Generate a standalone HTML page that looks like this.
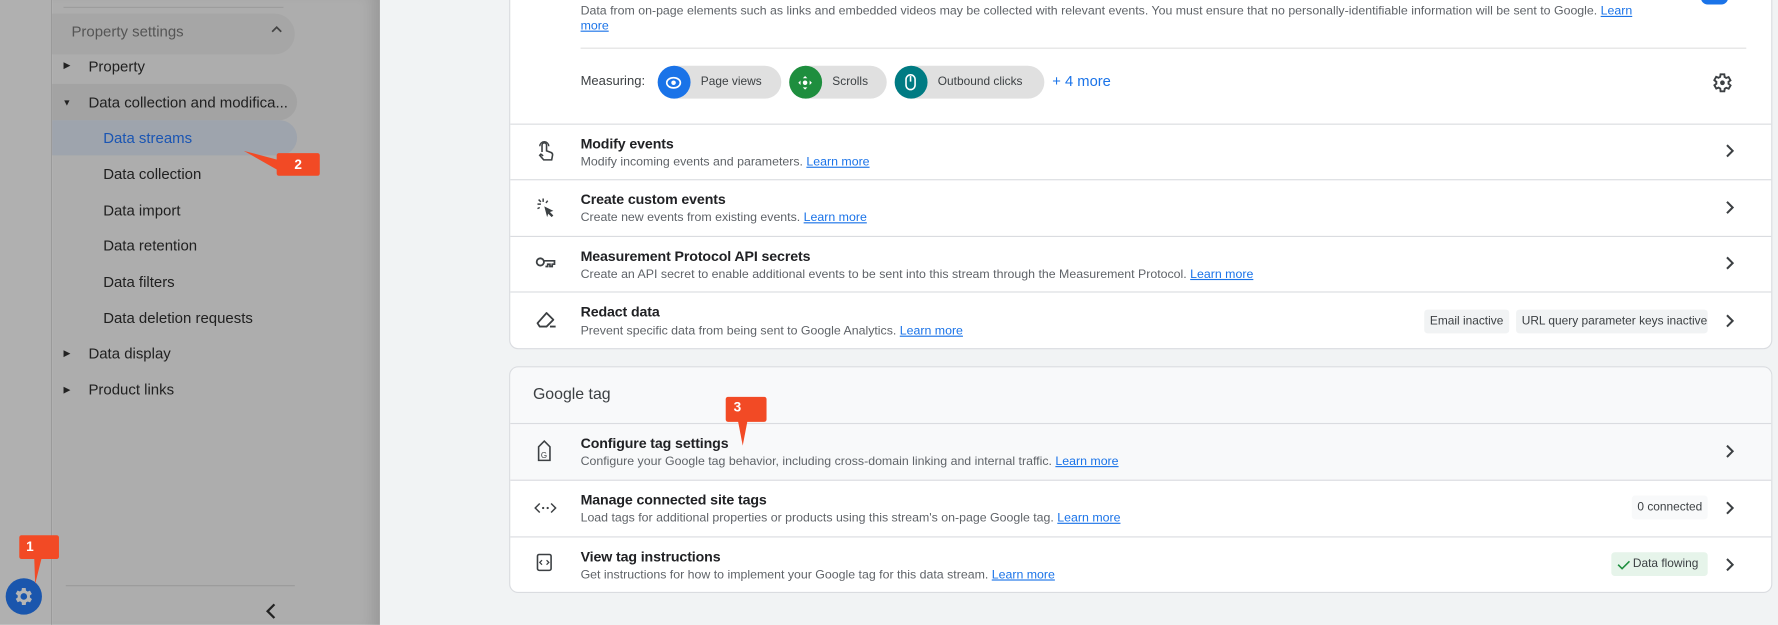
<!DOCTYPE html>
<html><head><meta charset="utf-8"><style>
*{box-sizing:border-box;margin:0;padding:0}
html,body{width:1778px;height:625px;overflow:hidden;background:#f1f3f4}
#w{position:absolute;left:0;top:0;width:1568px;height:551px;transform:scale(1.13393);transform-origin:0 0;font-family:"Liberation Sans",Arial,sans-serif;background:#f1f3f4}
.a{position:absolute;white-space:nowrap}
.rail{left:0;top:0;width:46px;height:551px;background:#b0b0b0;border-right:1px solid #9a9a9a}
.side{left:46px;top:0;width:289px;height:551px;background:#adadad;box-shadow:inset -14px 0 12px -8px rgba(0,0,0,.12)}
.si{font-size:13.2px;color:#202020}
.tri{font-size:8px;color:#222}
.card{background:#fff;border:1px solid #dadce0;border-radius:8px}
.t{font-size:12.5px;color:#202124;font-weight:bold;letter-spacing:-.1px}
.s{font-size:10.9px;color:#5f6368}
.lk{color:#1a73e8;text-decoration:underline}
.sep{height:1px;background:#dadce0}
.chip{height:21px;line-height:21px;font-size:10.5px;color:#3c4043;background:#f1f3f4;border-radius:3px;padding:0 5px}
.badge{background:#f24a25;color:#fff;font-weight:bold;font-size:12px;text-align:center;border-radius:2px}
.mc{height:29px;border-radius:15px;background:#e0e0e0;font-size:10.5px;color:#3c4043;line-height:29px}
.mc i{position:absolute;left:0;top:0;width:29px;height:29px;border-radius:50%}
</style></head><body><div id="w">
<div class="a rail"></div>
<div class="a side"></div>
<div class="a" style="left:56px;top:6px;width:194px;height:1px;background:#9c9c9c"></div>
<div class="a" style="left:46px;top:12px;width:214px;height:36px;border-radius:0 18px 18px 0;background:#a6a6a6"></div>
<div class="a si" style="left:63px;top:20px;color:#555">Property settings</div>
<svg class="a" style="left:237px;top:20px" width="14" height="12"><path d="M3 8l4-4 4 4" stroke="#444" stroke-width="1.5" fill="none"/></svg>
<div class="a tri" style="left:56px;top:53px">▶</div><div class="a si" style="left:78px;top:51px">Property</div>
<div class="a" style="left:46px;top:74px;width:216px;height:32px;border-radius:0 16px 16px 0;background:#a3a3a3"></div>
<div class="a tri" style="left:55px;top:86px">▼</div><div class="a si" style="left:78px;top:83px">Data collection and modifica...</div>
<div class="a" style="left:46px;top:106px;width:216px;height:31px;border-radius:0 16px 16px 0;background:#9ea4ad"></div>
<div class="a si" style="left:91px;top:114px;color:#1a55b3">Data streams</div>
<div class="a si" style="left:91px;top:146px">Data collection</div>
<div class="a si" style="left:91px;top:178px">Data import</div>
<div class="a si" style="left:91px;top:209px">Data retention</div>
<div class="a si" style="left:91px;top:241px">Data filters</div>
<div class="a si" style="left:91px;top:273px">Data deletion requests</div>
<div class="a tri" style="left:56px;top:307px">▶</div><div class="a si" style="left:78px;top:304px">Data display</div>
<div class="a tri" style="left:56px;top:339px">▶</div><div class="a si" style="left:78px;top:336px">Product links</div>
<svg class="a" style="left:210px;top:128px" width="75" height="30"><path d="M5 5L35 13L35 22Z" fill="#f24a25"/></svg>
<div class="a badge" style="left:244px;top:135px;width:38px;height:20px;line-height:20px">2</div>
<div class="a" style="left:58px;top:516px;width:202px;height:1px;background:#9a9a9a"></div>
<svg class="a" style="left:233px;top:531px" width="12" height="16"><path d="M9 2L3 8l6 6" stroke="#222" stroke-width="2" fill="none"/></svg>
<div class="a" style="left:5px;top:510px;width:32px;height:32px;border-radius:50%;background:#1a56ad"></div>
<svg class="a" style="left:11px;top:516px" width="20" height="20" viewBox="0 0 24 24"><path fill="#b5b5b5" d="M19.4 13a7.5 7.5 0 000-2l2.1-1.6-2-3.5-2.5 1a7.4 7.4 0 00-1.7-1L15 3h-4l-.4 2.7a7.4 7.4 0 00-1.7 1l-2.5-1-2 3.5L6.6 11a7.5 7.5 0 000 2l-2.1 1.6 2 3.5 2.5-1c.5.4 1.1.8 1.7 1L11 21h4l.4-2.7c.6-.3 1.2-.6 1.7-1l2.5 1 2-3.5zM13 15.5a3.5 3.5 0 110-7 3.5 3.5 0 010 7z" transform="translate(-1 0)"/></svg>
<svg class="a" style="left:20px;top:485px" width="30" height="32"><path d="M10 2L18 2L11 30Z" fill="#f24a25"/></svg>
<div class="a badge" style="left:17px;top:472px;width:35px;height:21px;line-height:20px;text-align:left;padding-left:6px">1</div>

<div class="a card" style="left:449px;top:-20px;width:1114px;height:328px"></div>
<div class="a s" style="left:512px;top:4px">Data from on-page elements such as links and embedded videos may be collected with relevant events. You must ensure that no personally-identifiable information will be sent to Google. <span class="lk">Learn</span></div>
<div class="a s lk" style="left:512px;top:17px">more</div>
<div class="a" style="left:1500px;top:-8px;width:24px;height:12px;border-radius:6px;background:#1a73e8"></div>
<div class="a" style="left:512px;top:42px;width:1028px;height:1px;background:#e0e0e0"></div>
<div class="a" style="left:512px;top:66px;font-size:11.5px;color:#3c4043">Measuring:</div>
<div class="a mc" style="left:580px;top:58px;width:109px;padding-left:38px"><i style="background:#1a73e8"></i>Page views</div>
<svg class="a" style="left:587px;top:66px" width="14" height="14"><ellipse cx="7" cy="7" rx="6" ry="4.5" stroke="#fff" stroke-width="1.5" fill="none"/><circle cx="7" cy="7" r="2" fill="#fff"/></svg>
<div class="a mc" style="left:696px;top:58px;width:86px;padding-left:38px"><i style="background:#1e8e3e"></i>Scrolls</div>
<svg class="a" style="left:703px;top:66px" width="14" height="14"><path d="M7 1l2 2H5zM7 13l2-2H5zM1 7l2-2v4zM13 7l-2-2v4z" fill="#fff"/><circle cx="7" cy="7" r="2" fill="#fff"/></svg>
<div class="a mc" style="left:789px;top:58px;width:132px;padding-left:38px"><i style="background:#007b83"></i>Outbound clicks</div>
<svg class="a" style="left:797px;top:65px" width="12" height="16"><rect x="2" y="1" width="8" height="13" rx="4" stroke="#fff" stroke-width="1.4" fill="none"/><path d="M6 2v5" stroke="#fff" stroke-width="1.4"/></svg>
<div class="a" style="left:928px;top:64px;font-size:13px;color:#1a73e8">+ 4 more</div>
<svg class="a" style="left:1509px;top:63px" width="20" height="20" viewBox="0 0 24 24"><path fill="none" stroke="#3c4043" stroke-width="2" d="M19.4 13a7.5 7.5 0 000-2l2.1-1.6-2-3.5-2.5 1a7.4 7.4 0 00-1.7-1L15 3h-4l-.4 2.7a7.4 7.4 0 00-1.7 1l-2.5-1-2 3.5L6.6 11a7.5 7.5 0 000 2l-2.1 1.6 2 3.5 2.5-1c.5.4 1.1.8 1.700 1L11 21h4l.4-2.7c.6-.3 1.2-.6 1.7-1l2.5 1 2-3.5z" transform="translate(-1 0)"/><circle cx="12" cy="12" r="2.5" fill="#3c4043"/></svg>

<div class="a sep" style="left:450px;top:109px;width:1112px"></div>
<div class="a sep" style="left:450px;top:158px;width:1112px"></div>
<div class="a sep" style="left:450px;top:208px;width:1112px"></div>
<div class="a sep" style="left:450px;top:257px;width:1112px"></div>

<svg class="a" style="left:472px;top:124px" width="18" height="20"><path d="M6 10V4a2 2 0 014 0v5l4 1.5c1 .5 1.5 1.2 1.3 2.3L14.5 17H7.5L4 13l1-1 2 1.5" stroke="#3c4043" stroke-width="1.4" fill="none"/><path d="M4 5a4 4 0 018 0" stroke="#3c4043" stroke-width="1.2" fill="none"/></svg>
<div class="a t" style="left:512px;top:120px">Modify events</div>
<div class="a s" style="left:512px;top:137px">Modify incoming events and parameters. <span class="lk">Learn more</span></div>
<svg class="a" style="left:472px;top:174px" width="18" height="18"><path d="M8 8l8 4-3 1 3 3-1.5 1.5-3-3-1 3z" fill="#3c4043"/><path d="M7 1v3M2 6h3M3 2l2 2M2 10l2-1M11 3l-1.5 2" stroke="#3c4043" stroke-width="1.3"/></svg>
<div class="a t" style="left:512px;top:169px">Create custom events</div>
<div class="a s" style="left:512px;top:186px">Create new events from existing events. <span class="lk">Learn more</span></div>
<svg class="a" style="left:472px;top:225px" width="18" height="14"><circle cx="4.5" cy="6" r="3.2" stroke="#3c4043" stroke-width="1.6" fill="none"/><path d="M8 5h9v3h-2v2h-2V8h-2v2H9" stroke="#3c4043" stroke-width="1.5" fill="none"/></svg>
<div class="a t" style="left:512px;top:219px">Measurement Protocol API secrets</div>
<div class="a s" style="left:512px;top:236px">Create an API secret to enable additional events to be sent into this stream through the Measurement Protocol. <span class="lk">Learn more</span></div>
<svg class="a" style="left:472px;top:273px" width="20" height="18"><path d="M2 12L10 3l6 6-6 6H4z" stroke="#3c4043" stroke-width="1.6" fill="none" stroke-linejoin="round"/><path d="M13 15h5" stroke="#3c4043" stroke-width="1.6"/></svg>
<div class="a t" style="left:512px;top:268px">Redact data</div>
<div class="a s" style="left:512px;top:286px">Prevent specific data from being sent to Google Analytics. <span class="lk">Learn more</span></div>
<div class="a chip" style="left:1256px;top:273px">Email inactive</div>
<div class="a chip" style="left:1337px;top:273px;width:169px">URL query parameter keys inactive</div>

<svg class="a" style="left:1520px;top:126px" width="12" height="14"><path d="M3 2l5 5-5 5" stroke="#3c4043" stroke-width="1.8" fill="none"/></svg>
<svg class="a" style="left:1520px;top:176px" width="12" height="14"><path d="M3 2l5 5-5 5" stroke="#3c4043" stroke-width="1.8" fill="none"/></svg>
<svg class="a" style="left:1520px;top:225px" width="12" height="14"><path d="M3 2l5 5-5 5" stroke="#3c4043" stroke-width="1.8" fill="none"/></svg>
<svg class="a" style="left:1520px;top:276px" width="12" height="14"><path d="M3 2l5 5-5 5" stroke="#3c4043" stroke-width="1.8" fill="none"/></svg>

<div class="a card" style="left:449px;top:323px;width:1114px;height:200px;overflow:hidden">
 <div class="a" style="left:0;top:0;width:1114px;height:100px;background:#f8f9fa"></div>
</div>
<div class="a" style="left:470px;top:339px;font-size:14px;color:#3c4043">Google tag</div>
<div class="a sep" style="left:450px;top:373px;width:1112px"></div>
<div class="a sep" style="left:450px;top:423px;width:1112px"></div>
<div class="a sep" style="left:450px;top:473px;width:1112px"></div>
<svg class="a" style="left:473px;top:387px" width="14" height="22"><path d="M2 7l5-5 5 5v12H2z" stroke="#3c4043" stroke-width="1.4" fill="none"/><text x="4" y="17" font-size="7" font-family="Liberation Sans" fill="#3c4043">G</text></svg>
<div class="a t" style="left:512px;top:384px">Configure tag settings</div>
<div class="a s" style="left:512px;top:401px">Configure your Google tag behavior, including cross-domain linking and internal traffic. <span class="lk">Learn more</span></div>
<svg class="a" style="left:471px;top:442px" width="20" height="12"><path d="M5 2L1 6l4 4M15 2l4 4-4 4" stroke="#3c4043" stroke-width="1.3" fill="none"/><circle cx="8" cy="6" r="1" fill="#3c4043"/><circle cx="12" cy="6" r="1" fill="#3c4043"/></svg>
<div class="a t" style="left:512px;top:434px">Manage connected site tags</div>
<div class="a s" style="left:512px;top:451px">Load tags for additional properties or products using this stream's on-page Google tag. <span class="lk">Learn more</span></div>
<svg class="a" style="left:473px;top:487px" width="14" height="18"><rect x="1" y="2" width="12" height="14" rx="1.5" stroke="#3c4043" stroke-width="1.4" fill="none"/><path d="M5 7l-2 2 2 2M9 7l2 2-2 2" stroke="#3c4043" stroke-width="1.1" fill="none"/></svg>
<div class="a t" style="left:512px;top:484px">View tag instructions</div>
<div class="a s" style="left:512px;top:501px">Get instructions for how to implement your Google tag for this data stream. <span class="lk">Learn more</span></div>
<div class="a chip" style="left:1439px;top:437px;background:#f8f9fa">0 connected</div>
<div class="a chip" style="left:1421px;top:487px;background:#e6f4ea;width:85px;padding-left:19px">Data flowing</div>
<svg class="a" style="left:1425px;top:492px" width="14" height="12"><path d="M2 6l3.5 3.5L12 3" stroke="#1e8e3e" stroke-width="1.4" fill="none"/></svg>
<svg class="a" style="left:1520px;top:391px" width="12" height="14"><path d="M3 2l5 5-5 5" stroke="#3c4043" stroke-width="1.8" fill="none"/></svg>
<svg class="a" style="left:1520px;top:441px" width="12" height="14"><path d="M3 2l5 5-5 5" stroke="#3c4043" stroke-width="1.8" fill="none"/></svg>
<svg class="a" style="left:1520px;top:491px" width="12" height="14"><path d="M3 2l5 5-5 5" stroke="#3c4043" stroke-width="1.8" fill="none"/></svg>

<svg class="a" style="left:645px;top:365px" width="20" height="30"><path d="M5 2L15 2L10 28Z" fill="#f24a25"/></svg>
<div class="a badge" style="left:640px;top:350px;width:36px;height:22px;line-height:19px;text-align:left;padding-left:7px">3</div>
</div></body></html>
